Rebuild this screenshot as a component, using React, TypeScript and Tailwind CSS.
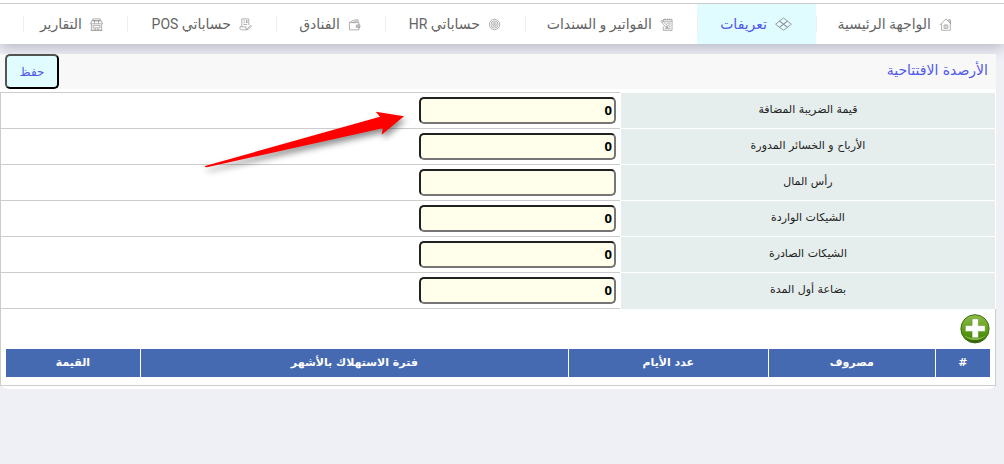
import type { ReactNode } from 'react';

interface NavItem {
  label: string;
  icon: ReactNode;
  width: string;
  active?: boolean;
}

interface BalanceField {
  id: string;
  label: string;
  value: string;
}

function Icon({ children }: { children: ReactNode }) {
  return (
    <svg viewBox="0 0 14 14" className="size-[13px] shrink-0" fill="none" stroke="currentColor" strokeWidth="0.7" aria-hidden="true">
      {children}
    </svg>
  );
}

const homeIcon = (
  <Icon>
    <path d="M1 7.500 7.500 1 13 6.500M2.800 6v7.200h9.400V3M12.200 5.800V1.800h-1.700V4M5.500 7.500h4v3.600h-4zM7.500 7.500v3.600" />
  </Icon>
);

const layersIcon = (
  <svg viewBox="0 0 17 14" className="h-[14px] w-[17px] shrink-0" fill="none" stroke="currentColor" strokeWidth="0.8" aria-hidden="true">
    <path d="M8.5 1 12.5 4 8.5 7 4.5 4zM4.5 4.2 8.5 7.2 4.5 10.2.6 7.2zM12.5 4.2 16.4 7.2 12.5 10.2 8.5 7.2zM8.5 7.4 12.5 10.3 8.5 13.2 4.5 10.3z" />
  </svg>
);

const invoiceIcon = (
  <Icon>
    <path d="M3.5 3V1.5H13v11.8H3.5V9M3.5 3.5H13M5.5.8v1.6M8 .8v1.6M10.5.8v1.6M7 5.5h4.5M8.5 7.5h3M9.5 9.5h2M5 11.5h6.5" />
    <path d="M1 3.5 2.5 2.4 8 8.6l.6 2.2-2.2-.8zM2 4.8l1.6-1.2M6.3 10 8 8.6" />
  </Icon>
);

const targetIcon = (
  <Icon>
    <circle cx="7" cy="7" r="5.6" />
    <circle cx="7" cy="7" r="3.8" />
    <circle cx="7" cy="7" r="2" />
    <circle cx="7" cy="7" r="0.6" />
  </Icon>
);

const walletIcon = (
  <Icon>
    <path d="M1.5 5h10.300v7.800H1.500zM1.500 5l4-2.400 5-.8.8 3.200M4.500 5l6-2M9 7.500h3.800v2.800H9z" />
    <circle cx="10.5" cy="8.9" r="0.5" />
  </Icon>
);

const documentIcon = (
  <Icon>
    <path d="M3 1h7.5v6.500M3 1v8.500H1v1.200c0 1.300.6 2 1.600 2h6M3 9.500h4.500v1.800c0 .9.5 1.400 1.200 1.400M4.800 3h1.600M4.800 5h1.600M4.800 7h4M8.300 2.500v2.800M7.500 3.200h1.700M7.500 4.600h1.700M12.600 7.800l.9.9-3.300 3.300-1.400.5.5-1.400z" />
  </Icon>
);

const storeIcon = (
  <Icon>
    <path d="M3 1h8v2H3zM1.8 3h10.400l1.200 3.200H.6zM4.800 3v3M9.200 3v3M1.500 6.500v6.700h11V6.500M3.200 8h7.600v2.600H3.200zM5.500 10.600v2.600M8.500 10.600v2.600M.8 13.200h12.400" />
  </Icon>
);

const navItems: NavItem[] = [
  { label: 'الواجهة الرئيسية', icon: homeIcon, width: 'w-40' },
  { label: 'تعريفات', icon: layersIcon, width: 'w-[119px]', active: true },
  { label: 'الفواتير و السندات', icon: invoiceIcon, width: 'w-[172px]' },
  { label: 'حساباتي HR', icon: targetIcon, width: 'w-[140px]' },
  { label: 'الفنادق', icon: walletIcon, width: 'w-[109px]' },
  { label: 'حساباتي POS', icon: documentIcon, width: 'w-[149px]' },
  { label: 'التقارير', icon: storeIcon, width: 'w-[104px]' },
];

const fields: BalanceField[] = [
  { id: 'vat', label: 'قيمة الضريبة المضافة', value: '0' },
  { id: 'retained', label: 'الأرباح و الخسائر المدورة', value: '0' },
  { id: 'capital', label: 'رأس المال', value: '' },
  { id: 'incoming', label: 'الشيكات الواردة', value: '0' },
  { id: 'outgoing', label: 'الشيكات الصادرة', value: '0' },
  { id: 'stock', label: 'بضاعة أول المدة', value: '0' },
];

const columns = [
  { label: '#', width: 'w-[5.6%]' },
  { label: 'مصروف', width: 'w-[17%]' },
  { label: 'عدد الأيام', width: 'w-[20.3%]' },
  { label: 'فترة الاستهلاك بالأشهر', width: 'w-[43.5%]' },
  { label: 'القيمة', width: 'w-[13.6%]' },
];

function NavBar() {
  return (
    <nav className="bg-white pt-[3px] shadow-[0_4px_14px_rgba(60,60,90,0.3)]">
      <ul className="flex border-t border-[#ccc] pr-7">
        {navItems.map(item => (
          <li key={item.label} className={`flex h-10 shrink-0 items-center ${item.width} ${item.active ? 'bg-[#e0fcff]' : ''}`}>
            <a
              href="#"
              className={`flex flex-1 items-center gap-2 whitespace-nowrap pr-6 font-[Roboto,'DejaVu_Sans',sans-serif] text-sm ${item.active ? 'text-[#5058e8]' : 'text-[#646464]'}`}
            >
              <span className="text-[#888]">{item.icon}</span>
              {item.label}
            </a>
            <span className="h-4 w-px bg-[#eee]" />
          </li>
        ))}
      </ul>
    </nav>
  );
}

function AddButton() {
  return (
    <button type="button" aria-label="إضافة" className="block size-[30px]">
      <svg viewBox="0 0 31 31" className="size-full" aria-hidden="true">
        <defs>
          <linearGradient id="addFill" x1="0" y1="0" x2="0" y2="1">
            <stop offset="0" stopColor="#8fbb4c" />
            <stop offset="0.45" stopColor="#68a420" />
            <stop offset="0.8" stopColor="#4c8a0c" />
            <stop offset="1" stopColor="#2c5407" />
          </linearGradient>
        </defs>
        <circle cx="15.5" cy="15.3" r="14.6" fill="url(#addFill)" stroke="#3d6e12" strokeWidth="1" />
        <path d="M4.500 22c4 6.500 18 6.500 22 0-5 4-17 4-22 0z" fill="#a5cf5c" opacity="0.75" />
        <path d="M12.500 5h6.500v7h7v6h-7v6.500h-6.500V18h-7v-6h7z" fill="#fff" stroke="#568f1b" strokeWidth="0.5" />
      </svg>
    </button>
  );
}

function Arrow() {
  return (
    <svg viewBox="0 0 210 66" className="pointer-events-none absolute left-[200px] top-[52px] h-[66px] w-[210px] overflow-visible" aria-hidden="true">
      <path
        d="M5 60 180 10.700 175.700 5.700 204 10.300 181.700 28.700 182.700 22.300 7 61.200 5 61z"
        fill="#f00"
        className="drop-shadow-[2px_4px_3px_rgba(0,0,0,0.45)]"
      />
    </svg>
  );
}

export default function App() {
  return (
    <div dir="rtl" className="min-h-screen bg-[#efeff6] font-['DejaVu_Sans',sans-serif] text-[#222]">
      <NavBar />
      <main className="relative mr-2 mt-[10px]">
        <form className="rounded-b-lg bg-white pb-[3px]" onSubmit={e => e.preventDefault()}>
          <header className="flex h-[35px] items-center justify-between bg-[#f8f8f8] pl-[5px] pr-2">
            <h1 className="pb-1 text-sm text-[#5058e8]">الأرصدة الافتتاحية</h1>
            <button
              type="submit"
              className="h-[35px] w-[54px] rounded-[5px] border-2 border-black bg-[#e0fcff] text-xs text-[#5058e8] [border-style:outset]"
            >
              حفظ
            </button>
          </header>

          <div className="mt-[3px] border-b border-l border-[#ccc]">
            <table className="w-full table-fixed border-separate border-spacing-0">
              <tbody>
                {fields.map(field => (
                  <tr key={field.id} className="group">
                    <th scope="row" className="w-[37.8%] border-x border-t border-white bg-[#e5eeed] p-0 pb-0.5 text-[11px] font-normal leading-4">
                      <label htmlFor={field.id}>{field.label}</label>
                    </th>
                    <td className="border-t border-[#ccc] p-1 group-last:border-b">
                      <input
                        id={field.id}
                        type="text"
                        defaultValue={field.value}
                        className="block h-[27px] w-[197px] rounded-[5px] border-2 border-[#767676] bg-[#ffffec] px-0.5 pb-0.5 font-['Noto_Sans',sans-serif] text-[13px] font-bold text-black [border-style:inset]"
                      />
                    </td>
                  </tr>
                ))}
              </tbody>
            </table>

            <div className="border-r border-[#ccc] px-[5px] pb-2 pt-[5px]">
              <AddButton />
              <table className="mt-[5px] w-full table-fixed border-separate border-spacing-0">
                <thead>
                  <tr>
                    {columns.map(col => (
                      <th
                        key={col.label}
                        scope="col"
                        className={`h-7 border-l border-white bg-[#466ab1] p-0 text-[11px] font-bold leading-4 text-white last:border-l-0 ${col.width}`}
                      >
                        {col.label}
                      </th>
                    ))}
                  </tr>
                </thead>
              </table>
            </div>
          </div>
        </form>
        <Arrow />
      </main>
    </div>
  );
}
